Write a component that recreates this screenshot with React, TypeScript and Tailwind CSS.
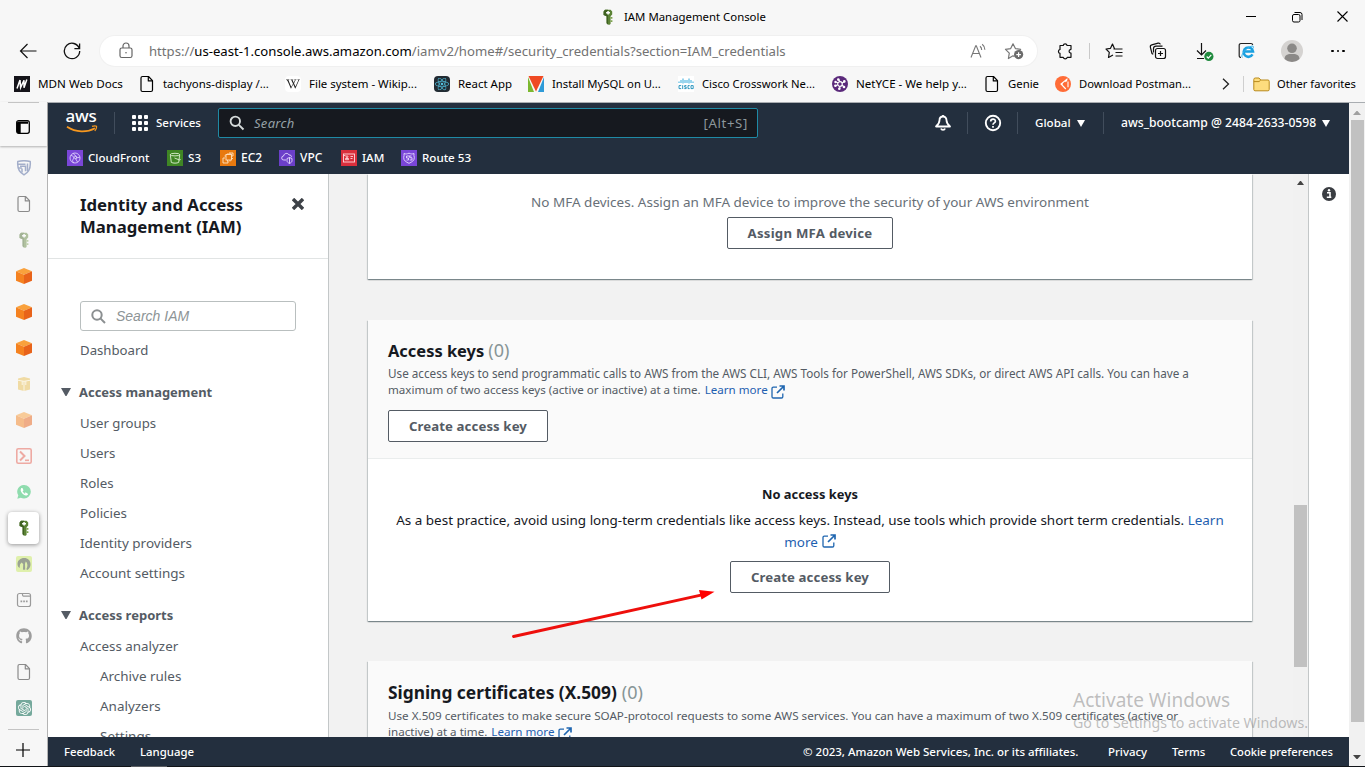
import React from "react";
import { FaGithub, FaReact, FaWikipediaW } from "react-icons/fa";
import { SiOpenai } from "react-icons/si";

type IconProps = { className?: string };

const KeyIcon = ({ className = "" }: IconProps) => (
  <svg viewBox="0 0 12 16" className={`h-4 w-3 ${className}`}>
    <path d="M3 .8h5.6l1.6 1.8v3L8.600 7.200V15L7 16 4.600 14.200V7.300L1.600 6V2.400z" fill="#5b8235" />
    <path d="M1.600 2.400 3 .8h3v15L4.600 14.200V7.300L1.600 6z" fill="#3f6121" />
    <path d="M8.600 8h1.800v1.800H8.600zM8.600 11.200h1.800V13H8.600z" fill="#7da34d" />
    <path d="M5.300 2h1.500v1.100h1.200v1.300H6.800v1.200H5.300V4.400H4.100V3.100h1.200z" fill="#fff" />
  </svg>
);

const PageIcon = ({ className = "" }: IconProps) => (
  <svg viewBox="0 0 16 18" className={className} fill="none" stroke="currentColor" strokeWidth="1.200" strokeLinejoin="round">
    <path d="M3.500 1.500h6l4 4.200V15a1.500 1.500 0 0 1-1.500 1.500H3.500A1.500 1.500 0 0 1 2 15V3a1.500 1.500 0 0 1 1.500-1.500z" />
    <path d="M9.300 1.700V5.900h4.100" />
  </svg>
);

const CubeIcon = ({ className = "" }: IconProps) => (
  <svg viewBox="0 0 16 16" className={`size-4 ${className}`}>
    <path d="M8 0l8 3.300L8 6.800 0 3.300z" fill="#f9a13c" />
    <path d="M0 3.300 8 6.800V16l-8-3.300z" fill="#f58220" />
    <path d="M16 3.300 8 6.800V16l8-3.300z" fill="#e8631a" />
  </svg>
);

const BoxIcon = () => (
  <svg viewBox="0 0 16 16" className="size-4">
    <path d="M2 2.600 8 1l6 1.600v10.800L8 15l-6-1.600z" fill="#f0dba4" />
    <path d="M1.500 4.200 8 5.300l6.500-1.100M8 5v10M6.200 5v4M9.800 5v4" stroke="#fbf6e6" strokeWidth="1" fill="none" />
  </svg>
);

const CrestIcon = () => (
  <svg viewBox="0 0 16 16" className="size-4" fill="none" stroke="#a3aeca" strokeWidth="1.500">
    <path d="M1.800 1.500c4-1 8.400-1 12.400 0 .6 6-.7 10.500-6.200 13.300C2.500 12 1.200 7.500 1.800 1.500z" />
    <path d="M2 4.200h7.500M4 6.300h5.500v5M6 8.400v4M11.500 3.500v7.500M2.500 8h3.300" />
  </svg>
);

const ShellIcon = () => (
  <svg viewBox="0 0 16 16" className="size-4" fill="none" stroke="#eeaaa3" strokeWidth="1.600">
    <rect x=".8" y=".8" width="14.400" height="14.400" rx="1.500" />
    <path d="M4 3.500 8.500 8 4 12.500" strokeWidth="2" />
    <path d="M9 12.300h4" />
  </svg>
);

const ChatIcon = () => (
  <svg viewBox="0 0 14 14" className="size-[14px]">
    <path d="M7.200 0A6.700 6.700 0 0 1 7 13.500c-1.200 0-2.300-.3-3.200-.8L.3 13.700l1-3.400A6.700 6.700 0 0 1 7.200 0z" fill="#8fdcae" />
    <path d="M4.800 4c-.7 1-.2 2.600 1.100 4s3 2.200 4 1.400" stroke="#fff" strokeWidth="1.500" fill="none" strokeLinecap="round" />
    <path d="M4.900 3.700 5.700 5.300M8.500 8.200l1.600.9" stroke="#fff" strokeWidth="1.500" strokeLinecap="round" />
  </svg>
);

const LeafIcon = () => (
  <svg viewBox="0 0 16 16" className="size-4">
    <rect width="16" height="16" rx="2" fill="#dff0ac" />
    <path d="M1.500 8C1.500 4.500 4.500 2 8.200 2c3.600 0 6.300 2.500 6.300 6.200 0 2.500-1 4.300-3 5.800l-1.200-.8c1.300-2 1.500-4.500.4-6.700L9.700 5.500 9 8l.2 5.500c-1 .5-1.800.3-2.200 0L7.200 8 5.500 6.500 4 8.500 3.600 12C2.300 11.200 1.500 10 1.500 8z" fill="#9aa193" />
  </svg>
);

const WindowIcon = () => (
  <svg viewBox="0 0 16 16" className="size-4" fill="none" stroke="#9b9b9b" strokeWidth="1.200">
    <rect x="1.500" y="1.500" width="13" height="13" rx="2" />
    <path d="M6.500 1.500v1.200a1.500 1.500 0 0 0 1.500 1.500h6.300" />
    <path d="M4.500 9.300h1.700M7.200 9.300h1.700M9.900 9.300h1.700" strokeWidth="1.700" />
  </svg>
);

const MdnIcon = () => (
  <svg viewBox="0 0 16 16" className="size-4">
    <rect width="16" height="16" fill="#15141a" />
    <path d="M3 12.500 6 4M6 4l.6 7.500L10 4.200v7.500L12.800 3.500" stroke="#fff" strokeWidth="1.500" fill="none" />
  </svg>
);

const VultureIcon = () => (
  <svg viewBox="0 0 16 16" className="size-4">
    <path d="M0 1l6 15H0z" fill="#7cb82f" />
    <path d="M16 1l-6 15h6z" fill="#2f9bd8" />
    <path d="M.5 0h15L8 15.500z" fill="#ef4a23" />
  </svg>
);

const CiscoIcon = () => (
  <svg viewBox="0 0 16 16" className="size-4">
    <rect width="16" height="16" fill="#fff" />
    <path d="M1 5.500v1.500M3 4v3M5 2.500v5M7 4v3M9 4v3M11 2.500v5M13 4v3M15 5.500v1.500" stroke="#1ba0d7" strokeWidth=".9" />
    <path d="M3.200 9.600H1v3h2.200M4.700 9.200v3.800M8.400 9.600H6.700v1.500h1.500v1.500H6.300M11.700 9.600H10v3h1.700M13 9.600h2.200v3H13z" stroke="#1b8cb8" strokeWidth=".9" fill="none" />
  </svg>
);

const NetyceIcon = () => (
  <svg viewBox="0 0 16 16" className="size-4">
    <circle cx="8" cy="8" r="8" fill="#5b2a7b" />
    <circle cx="8" cy="8" r="2.300" fill="none" stroke="#fff" strokeWidth="1.200" />
    <path d="M8 5.500 6.500 3.500M10 7l2.800-1.500M10 9.200l2.500 1.800M8 10.500l-.5 2.500M5.700 8.800 3.200 10M6 6.800 3.500 6" stroke="#fff" strokeWidth="1.200" />
    <g fill="#fff"><circle cx="6.300" cy="3.600" r="1.300" /><circle cx="12.300" cy="5.400" r="1.300" /><circle cx="12" cy="11" r="1.300" /><circle cx="7.300" cy="12.800" r="1.300" /><circle cx="3.400" cy="9.800" r="1.300" /><circle cx="3.500" cy="6" r="1.200" /></g>
  </svg>
);

const PostmanIcon = () => (
  <svg viewBox="0 0 16 16" className="size-4">
    <circle cx="8" cy="8" r="8" fill="#ff6c37" />
    <path d="M12.500 2.800 6 8l4.800 5M10.500 5.800 12 4M6 8h1.800M13 5.500v5.700" stroke="#fff" strokeWidth="1.100" fill="none" />
  </svg>
);

const Sep = ({ className = "" }: IconProps) => <div className={`w-px shrink-0 ${className}`} />;

const bookmarks = [
  { w: "w-[125px]", icon: <MdnIcon />, label: "MDN Web Docs", t: "text-[11.64px]" },
  { w: "w-[146px]", icon: <PageIcon className="h-[18px] w-4 text-black" />, label: "tachyons-display /...", t: "text-[11.41px]" },
  { w: "w-[149px]", icon: <span className="flex size-4 items-center justify-center rounded-sm bg-white"><FaWikipediaW className="size-[14px] text-[#222]" /></span>, label: "File system - Wikip...", t: "text-[11.46px]" },
  { w: "w-[94px]", icon: <span className="flex size-4 items-center justify-center rounded-sm bg-[#222b33]"><FaReact className="size-[14px] text-[#53c1de]" /></span>, label: "React App", t: "text-[11.45px]" },
  { w: "w-[150px]", icon: <VultureIcon />, label: "Install MySQL on U...", t: "text-[11.28px]" },
  { w: "w-[154px]", icon: <CiscoIcon />, label: "Cisco Crosswork Ne...", t: "text-[11.27px]" },
  { w: "w-[152px]", icon: <NetyceIcon />, label: "NetYCE - We help y...", t: "text-[11.58px]" },
  { w: "w-[71px]", icon: <PageIcon className="h-[18px] w-4 text-black" />, label: "Genie", t: "text-[11.35px]" },
  { w: "w-[158px]", icon: <PostmanIcon />, label: "Download Postman...", t: "text-[11.22px]" },
];

function BrowserChrome() {
  return (
    <header className="h-[102px] shrink-0 bg-[#f7f7f7] text-black">
      <div className="flex h-[33px] items-center">
        <div className="flex w-[1228px] items-center gap-[10px] pl-[602px]">
          <KeyIcon />
          <span className="text-[11.39px] leading-4">IAM Management Console</span>
        </div>
        <div className="flex w-[46px] justify-center"><div className="h-px w-[10px] bg-black" /></div>
        <div className="flex w-[46px] justify-center">
          <svg viewBox="0 0 12 12" className="size-3" fill="none" stroke="#000" strokeWidth="1">
            <rect x="1.500" y="3.500" width="7.500" height="7.500" rx="1.500" />
            <path d="M3.500 1.500H9a2 2 0 0 1 2 2V9" />
          </svg>
        </div>
        <div className="flex w-[45px] justify-center">
          <svg viewBox="0 0 11 11" className="size-[11px]" stroke="#000" strokeWidth="1.100"><path d="M.5.5l10 10M10.500.5l-10 10" /></svg>
        </div>
      </div>
      <div className="flex h-9 items-center pl-[10px]">
        <div className="flex w-9 justify-center">
          <svg viewBox="0 0 18 16" className="h-4 w-[18px]" fill="none" stroke="#111" strokeWidth="1.200"><path d="M1.500 8h16M8.500 1 1.500 8l7 7" /></svg>
        </div>
        <div className="ml-2 flex w-9 justify-center">
          <svg viewBox="0 0 18 18" className="size-[18px]" fill="none" stroke="#111" strokeWidth="1.300"><path d="M16.300 6.500A7.700 7.700 0 1 0 16.700 9M16.600 1.500v5.200h-5.200" /></svg>
        </div>
        <div className="ml-[10px] flex h-[30px] w-[937px] items-center rounded-full bg-white pr-1 pl-[18px] shadow-[0_0_1px_1px_rgba(0,0,0,0.03)]">
          <svg viewBox="0 0 16 18" className="h-[18px] w-4" fill="none" stroke="#666" strokeWidth="1.200">
            <rect x="2" y="6" width="12" height="9.500" rx="1.800" />
            <path d="M5 6V4a3 3 0 0 1 6 0v2" />
            <circle cx="8" cy="10.700" r=".8" fill="#666" stroke="none" />
          </svg>
          <span className="ml-[15px] w-[811px] text-[13.15px] leading-5 whitespace-nowrap text-[#727272]">
            https://<span className="text-black">us-east-1.console.aws.amazon.com</span>/iamv2/home#/security_credentials?section=IAM_credentials
          </span>
          <div className="flex w-9 justify-center">
            <svg viewBox="0 0 18 16" className="h-4 w-[18px]" fill="none" stroke="#777" strokeWidth="1.100">
              <path d="M2 14.500 6.700 2.800h.6l4.700 11.700M3.700 10.500h6.600M11 3.300a4.500 4.500 0 0 1 1.700 3.600M13.200 1.300a7 7 0 0 1 2.700 5.400" />
            </svg>
          </div>
          <div className="flex w-9 justify-center">
            <svg viewBox="0 0 20 18" className="h-[18px] w-5" fill="none" stroke="#777" strokeWidth="1.200" strokeLinejoin="round">
              <path d="M10.500 14.600 9 13.800l-4.600 2.700.9-5.300L1.500 7.300l5.200-.7L9 1.800l2.400 4.800 5.200.7-1.600 1.700" />
              <circle cx="14.600" cy="12.600" r="4.600" fill="#6b6b6b" stroke="none" />
              <path d="M14.600 10.300v4.600M12.300 12.600h4.600" stroke="#fff" />
            </svg>
          </div>
        </div>
        <div className="ml-[10px] flex w-9 justify-center">
          <svg viewBox="0 0 18 18" className="size-[18px]" fill="none" stroke="#111" strokeWidth="1.200" strokeLinejoin="round">
            <path d="M4 3.500h3.200a2 2 0 0 1 3.900 0H15V7a.7.700 0 0 1-.7.700 1.600 1.600 0 0 0 0 3.100.7.700 0 0 1 .7.700v3.800h-3.800a2 2 0 0 1-3.900 0H4v-3.900a2 2 0 0 1 0-3.900z" />
          </svg>
        </div>
        <Sep className="ml-[6px] h-4 bg-[#c9c9c9]" />
        <div className="ml-[6px] flex w-9 justify-center">
          <svg viewBox="0 0 18 18" className="size-[18px]" fill="none" stroke="#111" strokeWidth="1.200" strokeLinejoin="round">
            <path d="M9.500 6.800 7.500 2 5.500 6.300 1 7l3.300 3.400L3.500 15.500 8 13M8.500 7h9M10.500 10.500h7M10.500 14h7" />
          </svg>
        </div>
        <div className="ml-2 flex w-9 justify-center">
          <svg viewBox="0 0 18 18" className="size-[18px]" fill="none" stroke="#111" strokeWidth="1.200">
            <rect x="6.500" y="6.500" width="10" height="10" rx="2" />
            <path d="M11.500 9v5M9 11.500h5M4.300 12.300 3 11.500 1.400 5.300a2 2 0 0 1 1.400-2.400l6.300-1.700a2 2 0 0 1 2.300 1.200M4.500 10.500v-4a2.500 2.500 0 0 1 2.500-2.400h6.500" />
          </svg>
        </div>
        <div className="ml-[11px] flex w-9 justify-center">
          <svg viewBox="0 0 18 20" className="h-5 w-[18px]" fill="none" stroke="#111" strokeWidth="1.200">
            <path d="M5.500 2v12M1 9.500l4.500 4.500L10 9.500M1 17.500h7" />
            <circle cx="12.900" cy="15.400" r="4.600" fill="#1f8a3d" stroke="none" />
            <path d="m10.700 15.500 1.600 1.600 3-3.200" stroke="#fff" />
          </svg>
        </div>
        <div className="ml-[5px] flex w-9 justify-center">
          <svg viewBox="0 0 18 18" className="size-[18px]" fill="none">
            <path d="M4 15.500A1.800 1.800 0 0 1 2.200 13.700V3.200A1.700 1.700 0 0 1 4 1.500h10A1.700 1.700 0 0 1 15.700 3" stroke="#222" strokeWidth="1.200" />
            <path d="M15.500 12.400a4.700 4.700 0 1 1 .5-3H7.500" stroke="#1aa0e0" strokeWidth="2.500" />
            <path d="M5.500 15.500C3 14 8 6 15 4c2-.2 1.500 1.500 1 2.500" stroke="#35b4ee" strokeWidth="1" />
          </svg>
        </div>
        <div className="ml-[10px] flex w-9 justify-center">
          <svg viewBox="0 0 22 22" className="size-[22px]">
            <circle cx="11" cy="11" r="11" fill="#d5d3d1" />
            <circle cx="11" cy="8.300" r="4.800" fill="#8b8987" />
            <path d="M3.500 19c.5-5 4-5 7.500-5s7 0 7.500 5a11 11 0 0 1-15 0z" fill="#8b8987" />
          </svg>
        </div>
        <div className="ml-[10px] flex w-9 justify-center gap-[3px]">
          <i className="size-[2.500px] rounded-full bg-black" /><i className="size-[2.500px] rounded-full bg-black" /><i className="size-[2.500px] rounded-full bg-black" />
        </div>
      </div>
      <div className="flex h-[30px] items-center pl-[14px] whitespace-nowrap">
        {bookmarks.map((b) => (
          <div key={b.label} className={`flex shrink-0 items-center gap-2 ${b.w}`}>
            {b.icon}
            <span className={`leading-4 ${b.t}`}>{b.label}</span>
          </div>
        ))}
        <div className="flex w-[30px] justify-center pr-1">
          <svg viewBox="0 0 8 12" className="h-3 w-2" fill="none" stroke="#222" strokeWidth="1.300"><path d="M1 .8 6.500 6 1 11.200" /></svg>
        </div>
        <Sep className="h-4 bg-[#cfcfcf]" />
        <svg viewBox="0 0 17 16" className="ml-[9px] h-4 w-[17px]" stroke="#b98a1c" strokeWidth="1">
          <path d="M.8 3.500A1.500 1.500 0 0 1 2.300 2H6l1.800 2H15a1.300 1.300 0 0 1 1.200 1.300v8.200a1.300 1.300 0 0 1-1.300 1.300H2a1.300 1.300 0 0 1-1.200-1.300z" fill="#fddc7d" />
          <path d="M.8 5.600H6L7.800 4" fill="none" />
        </svg>
        <span className="ml-[7px] text-[11.14px] leading-4">Other favorites</span>
      </div>
    </header>
  );
}

const tabs: { key: string; icon: React.ReactNode; active?: boolean }[] = [
  { key: "crest", icon: <CrestIcon /> },
  { key: "page1", icon: <PageIcon className="h-[18px] w-4 text-[#8b8b8b]" /> },
  { key: "key1", icon: <KeyIcon className="opacity-45" /> },
  { key: "cube1", icon: <CubeIcon /> },
  { key: "cube2", icon: <CubeIcon /> },
  { key: "cube3", icon: <CubeIcon /> },
  { key: "box", icon: <BoxIcon /> },
  { key: "cube4", icon: <CubeIcon className="opacity-50" /> },
  { key: "shell", icon: <ShellIcon /> },
  { key: "chat", icon: <ChatIcon /> },
  { key: "iam", icon: <KeyIcon />, active: true },
  { key: "leaf", icon: <LeafIcon /> },
  { key: "window", icon: <WindowIcon /> },
  { key: "github", icon: <FaGithub className="size-4 text-[#9d9d9d]" /> },
  { key: "page2", icon: <PageIcon className="h-[18px] w-4 text-[#8b8b8b]" /> },
  { key: "ai", icon: <span className="flex size-4 items-center justify-center rounded-[2px] bg-[#75a99c]"><SiOpenai className="size-[13px] text-white" /></span> },
];

function TabRail() {
  return (
    <aside className="flex w-12 shrink-0 flex-col border-r border-[#b4b4b4] bg-[#f7f7f7]">
      <div className="flex h-[44px] flex-col shadow-[0_1px_2px_rgba(0,0,0,0.28)]">
        <div className="mx-2 h-px bg-[#c4c4c4]" />
        <div className="flex flex-1 items-center justify-center pt-1 pr-px">
          <svg viewBox="0 0 14 14" className="size-[14px]">
            <rect x=".7" y=".7" width="12.600" height="12.600" rx="2" fill="none" stroke="#000" strokeWidth="1.300" />
            <path d="M2 1.500h10v2.200H4.700V13H2a1 1 0 0 1-1-1V2.500z" fill="#000" />
          </svg>
        </div>
      </div>
      <div className="mt-1 flex flex-col">
        {tabs.map((t) => (
          <div key={t.key} className="flex h-9 items-center justify-center pl-px">
            {t.active ? (
              <div className="mr-px flex h-8 w-[31px] items-center justify-center rounded bg-white pl-px shadow-[0_1px_4px_rgba(0,0,0,0.4)]">{t.icon}</div>
            ) : (
              t.icon
            )}
          </div>
        ))}
      </div>
      <div className="mx-2 mt-[3px] h-px bg-[#c4c4c4]" />
      <div className="flex flex-1 items-center justify-center pt-1 pr-px">
        <svg viewBox="0 0 14 14" className="size-[14px]" stroke="#000" strokeWidth="1.200"><path d="M7 0v14M0 7h14" /></svg>
      </div>
    </aside>
  );
}

const tile = "size-4 shrink-0";
const shortcuts = [
  { label: "CloudFront", w: "w-[100px]", t: "text-[11.55px]", icon: (
    <svg viewBox="0 0 16 16" className={tile}><rect width="16" height="16" fill="#7a46d8" /><g fill="none" stroke="#e6dcff" strokeWidth=".8"><circle cx="8" cy="8" r="5" /><path d="M4 5.500c3 0 3 3 2 4s0 3 1 3.500M6.500 3.300c0 2 3 2 3 4M9 8l3.800-.8M8.500 8.500 10.500 12" /><circle cx="8.500" cy="7.500" r="1.200" /></g></svg>
  ) },
  { label: "S3", w: "w-[53px]", t: "text-[11.6px]", icon: (
    <svg viewBox="0 0 16 16" className={tile}><rect width="16" height="16" fill="#3f8624" /><g fill="none" stroke="#dcefd2" strokeWidth=".9"><ellipse cx="8" cy="4.600" rx="4.700" ry="1.300" /><path d="m3.300 4.600 1 7.800c1.800 1 5.600 1 7.400 0l1-7.800M7.500 8l5 2c1 .2 1-.6.300-1" /></g></svg>
  ) },
  { label: "EC2", w: "w-[59px]", t: "text-[12px]", icon: (
    <svg viewBox="0 0 16 16" className={tile}><rect width="16" height="16" fill="#e8790f" /><g fill="none" stroke="#ffe3c2" strokeWidth=".9"><rect x="6" y="4.500" width="5.500" height="5.500" /><path d="M5 8H3v5h5v-2M8 4.500V3M10 4.500V3M11.500 6H13M11.500 8.500H13M7.500 10v1.500M10 10v1.500M6 6H4.500M9 3h4v3" /></g></svg>
  ) },
  { label: "VPC", w: "w-[62px]", t: "text-[12px]", icon: (
    <svg viewBox="0 0 16 16" className={tile}><rect width="16" height="16" fill="#6b3fc9" /><g fill="none" stroke="#e6dcff" strokeWidth=".9"><path d="M7 10H4.800a2 2 0 0 1-.2-4C5 3 9 2.500 10 5c1.500-.2 2.500.6 2.500 1.800" /><path d="M8 8.500 10.500 7.500 13 8.500v2c0 1.500-1 2.300-2.500 3-1.500-.7-2.500-1.500-2.500-3zM10.500 7.500v6" /></g></svg>
  ) },
  { label: "IAM", w: "w-[60px]", t: "text-[11.6px]", icon: (
    <svg viewBox="0 0 16 16" className={tile}><rect width="16" height="16" fill="#d92f3c" /><g fill="none" stroke="#ffd9dc" strokeWidth=".9"><rect x="2.500" y="4" width="11" height="8" /><path d="M4.500 9.700h3V8.500h-3zM9.500 6.500h2.500M9.500 8.500h2M2.500 5.500h2" /><circle cx="6" cy="6.700" r=".9" /></g></svg>
  ) },
  { label: "Route 53", w: "w-[80px]", t: "text-[11.6px]", icon: (
    <svg viewBox="0 0 16 16" className={tile}><rect width="16" height="16" fill="#7a46d8" /><g fill="none" stroke="#e6dcff" strokeWidth=".9"><path d="M3 3.500c1.500.8 3 .5 5-.3 2 .8 3.500 1.100 5 .3-.3 1.500 0 2.500.3 4 .2 3-2.300 4.500-5.300 5.800C5 12 2.500 10.500 2.700 7.500 3 6 3.300 5 3 3.500z" /><path d="M5.500 6h5M5.500 6v2h2v2h-2M8.700 6v1.700H11V10H8.700" /></g></svg>
  ) },
];

const Caret = ({ className = "" }: IconProps) => (
  <svg viewBox="0 0 8 7" className={`h-[7px] w-2 ${className}`} fill="currentColor"><path d="M0 0h8L4 7z" /></svg>
);

function ConsoleNav() {
  return (
    <nav className="h-[71px] shrink-0 bg-[#232f3e] font-medium text-white">
      <div className="flex h-10 items-center pl-[18px]">
        <div className="flex w-8 flex-col items-center">
          <span className="-mt-[3px] mr-[2px] text-[17px] leading-[14px] font-medium tracking-[-0.2px]">aws</span>
          <svg viewBox="0 0 32 9" className="mt-[2px] h-[9px] w-8" fill="none" stroke="#f7981f">
            <path d="M1 1.800c9 5.900 20 5.900 28 1.500" strokeWidth="1.700" />
            <path d="M26 1.400c2-.7 3.700-.7 4.500-.2.300 1-.4 3-1.700 4.800" strokeWidth="1.200" />
          </svg>
        </div>
        <Sep className="ml-4 h-[22px] bg-[#414d5c]" />
        <div className="ml-[17px] grid size-4 grid-cols-3 gap-[2px]">
          {Array.from({ length: 9 }, (_, i) => <i key={i} className="rounded-[1px] bg-white" />)}
        </div>
        <span className="ml-2 w-[62px] text-[11.55px] leading-4">Services</span>
        <div className="flex h-[30px] w-[540px] items-center rounded-[2px] border border-[#1f8aa5] bg-[#16191f] pr-[9px] pl-[10px] font-normal">
          <svg viewBox="0 0 16 16" className="size-4" fill="none" stroke="#d5dbdb" strokeWidth="1.900"><circle cx="6.300" cy="6.300" r="4.700" /><path d="m9.800 9.800 4.700 4.700" /></svg>
          <span className="ml-[9px] flex-1 text-[13px] leading-5 tracking-[0.3px] text-[#95a0a6] italic">Search</span>
          <span className="text-[13.2px] leading-5 tracking-[0.65px] text-[#8d979c]">[Alt+S]</span>
        </div>
        <div className="ml-[176px] flex w-[18px] justify-center">
          <svg viewBox="0 0 18 18" className="size-[18px]" fill="none" stroke="#fff" strokeWidth="1.800" strokeLinejoin="round"><path d="M9 2.500c-2.300 0-3.500 1.700-3.500 3.700 0 2.500-1 4-3.500 6.300h14c-2.500-2.300-3.500-3.800-3.500-6.300 0-2-1.200-3.700-3.500-3.700zM9 2.500V1M7 14.500c.5 1.700 3.500 1.700 4 0" /></svg>
        </div>
        <Sep className="ml-[15px] h-[22px] bg-[#414d5c]" />
        <svg viewBox="0 0 18 18" className="ml-4 size-[18px]" fill="none" stroke="#fff" strokeWidth="1.900"><circle cx="9" cy="9" r="7.200" /><path d="M6.700 7.500c0-3 4.700-3 4.700-.3 0 1.700-2.400 1.700-2.400 3.500M9 12v1.700" strokeWidth="1.700" /></svg>
        <Sep className="ml-[15px] h-[22px] bg-[#414d5c]" />
        <span className="ml-[17px] w-[36px] text-[11.6px] leading-4">Global</span>
        <Caret className="ml-[6px]" />
        <Sep className="ml-[18px] h-[22px] bg-[#414d5c]" />
        <span className="ml-[17px] w-[195px] text-[12.15px] leading-4 whitespace-nowrap">aws_bootcamp @ 2484-2633-0598</span>
        <Caret className="ml-[6px]" />
      </div>
      <div className="flex h-[30px] items-center pl-[19px]">
        {shortcuts.map((s) => (
          <div key={s.label} className={`flex items-center gap-[5px] ${s.w}`}>
            {s.icon}
            <span className={`leading-4 whitespace-nowrap ${s.t}`}>{s.label}</span>
          </div>
        ))}
      </div>
    </nav>
  );
}

const NavLink = ({ children, className = "text-[13.3px]" }: { children: React.ReactNode; className?: string }) => (
  <a className={`block h-[30px] pl-8 leading-[30px] whitespace-nowrap ${className}`}>{children}</a>
);

const NavGroup = ({ title, className }: { title: string; className: string }) => (
  <div className={`mt-3 mb-px flex h-[30px] items-center pl-[13px] font-bold ${className}`}>
    <svg viewBox="0 0 10 8" className="h-2 w-[10px]" fill="#545b64"><path d="M0 0h10L5.500 8h-1z" /></svg>
    <span className="ml-2 leading-[30px]">{title}</span>
  </div>
);

function SideNav() {
  return (
    <aside className="flex w-[281px] shrink-0 flex-col overflow-hidden border-r border-[#c3c7c8] bg-white text-[#545b64]">
      <div className="flex h-[85px] shrink-0 border-b border-[#e1e4e4] pt-5 pl-8 text-[16.75px] leading-[22px] font-bold text-[#16191f]">
        <h2 className="w-[212px]">Identity and Access<br />Management (IAM)</h2>
        <svg viewBox="0 0 12 12" className="mt-1 size-3" stroke="#3d4147" strokeWidth="3.400"><path d="m1 1 10 10M11 1 1 11" /></svg>
      </div>
      <div className="mt-[42px] mb-1 ml-8 flex h-[30px] w-[216px] shrink-0 items-center rounded-[3px] border border-[#b9bfbf] pl-[10px]">
        <svg viewBox="0 0 15 15" className="size-[15px]" fill="none" stroke="#8b8f91" strokeWidth="2"><circle cx="6" cy="6" r="4.700" /><path d="m9.400 9.400 4.600 4.600" /></svg>
        <span className="ml-[10px] font-['Liberation_Sans'] text-[14px] leading-5 text-[#8d9496] italic">Search IAM</span>
      </div>
      <NavLink className="text-[13.2px]">Dashboard</NavLink>
      <NavGroup title="Access management" className="text-[12.95px]" />
      <NavLink className="text-[13.2px]">User groups</NavLink>
      <NavLink>Users</NavLink>
      <NavLink>Roles</NavLink>
      <NavLink className="text-[13.4px]">Policies</NavLink>
      <NavLink className="text-[13.47px]">Identity providers</NavLink>
      <NavLink className="text-[13.47px]">Account settings</NavLink>
      <NavGroup title="Access reports" className="text-[13px]" />
      <NavLink className="text-[13.4px]">Access analyzer</NavLink>
      <div className="pl-5">
        <NavLink className="text-[13.45px]">Archive rules</NavLink>
        <NavLink className="text-[13.45px]">Analyzers</NavLink>
        <NavLink className="text-[13.45px]">Settings</NavLink>
      </div>
    </aside>
  );
}

const ExternalIcon = ({ className = "" }: IconProps) => (
  <svg viewBox="0 0 14 14" className={`inline-block size-[14px] ${className}`} fill="none" stroke="#1f66b0" strokeWidth="1.700">
    <path d="M6 2.200H2.300a1.300 1.300 0 0 0-1.300 1.300v8.200A1.300 1.300 0 0 0 2.300 13h8.200a1.300 1.300 0 0 0 1.300-1.300V8.500" strokeWidth="1.300" />
    <path d="M8.500 1H13v4.500M13 1 6 8" />
  </svg>
);

const OutlineButton = ({ children, className }: { children: React.ReactNode; className: string }) => (
  <button className={`flex h-8 items-center justify-center rounded-[2px] border border-[#545b64] bg-white font-bold whitespace-nowrap text-[#545b64] ${className}`}>{children}</button>
);

const card = "w-[884px] shrink-0 bg-white shadow-[0_1px_1px_0_rgba(0,28,36,0.3),1px_1px_1px_0_rgba(0,28,36,0.15),-1px_1px_1px_0_rgba(0,28,36,0.15)]";

function Main() {
  return (
    <main className="flex flex-1 flex-col items-start overflow-hidden bg-[#f2f2f2] pl-[39px] whitespace-nowrap">
      <section className={`${card} flex h-[105px] flex-col items-center pt-[17px]`}>
        <p className="text-[13.49px] leading-[22px] tracking-[0.01px] text-[#687078]">No MFA devices. Assign an MFA device to improve the security of your AWS environment</p>
        <OutlineButton className="mt-1 w-[166px] pt-px text-[13.2px] tracking-[0.25px]">Assign MFA device</OutlineButton>
      </section>
      <section className={`${card} mt-[41px] flex h-[301px] flex-col`}>
        <div className="h-[139px] shrink-0 border-b border-[#eaeded] bg-[#fafafa] px-5 pt-5">
          <h2 className="flex h-[22px] items-baseline gap-1 text-[16.45px] leading-[22px] font-bold text-[#16191f]">Access keys<span className="text-[18px] leading-5 font-normal text-[#879596]">(0)</span></h2>
          <p className="mt-1 text-[11.69px] leading-4 text-[#545b64]">Use access keys to send programmatic calls to AWS from the AWS CLI, AWS Tools for PowerShell, AWS SDKs, or direct AWS API calls. You can have a</p>
          <p className="flex h-4 text-[11.59px] leading-4 text-[#545b64]">maximum of two access keys (active or inactive) at a time.<a className="ml-1 text-[#1f5fb0]">Learn more</a><ExternalIcon className="mt-[3px] ml-[3px]" /></p>
          <OutlineButton className="mt-3 w-[160px] pt-px text-[13.2px] tracking-[0.1px]">Create access key</OutlineButton>
        </div>
        <div className="flex flex-col items-center pt-6 text-[13.46px] leading-[22px] text-[#16191f]">
          <h3 className="text-[12.87px] font-bold">No access keys</h3>
          <p className="mt-1">As a best practice, avoid using long-term credentials like access keys. Instead, use tools which provide short term credentials. <a className="text-[#1f5fb0]">Learn</a></p>
          <p className="flex items-center text-[#1f5fb0]">more<ExternalIcon className="-mt-[2px] ml-1" /></p>
          <OutlineButton className="mt-2 w-[160px] text-[13.2px] leading-5 tracking-[0.1px]">Create access key</OutlineButton>
        </div>
      </section>
      <section className={`${card} mt-10 h-[160px]`}>
        <div className="h-full bg-[#fafafa] px-5 pt-5">
          <h2 className="flex h-[22px] items-baseline gap-[5px] text-[17.34px] leading-[22px] font-bold text-[#16191f]">Signing certificates (X.509)<span className="text-[18px] leading-5 font-normal text-[#879596]">(0)</span></h2>
          <p className="mt-[5px] text-[11.67px] leading-4 text-[#545b64]">Use X.509 certificates to make secure SOAP-protocol requests to some AWS services. You can have a maximum of two X.509 certificates (active or</p>
          <p className="flex h-4 text-[11.62px] leading-4 text-[#545b64]">inactive) at a time.<a className="ml-1 text-[#1f5fb0]">Learn more</a><ExternalIcon className="mt-[3px] ml-1" /></p>
        </div>
      </section>
    </main>
  );
}

function ConsoleFooter() {
  return (
    <footer className="flex h-[29px] shrink-0 items-center bg-[#232f3e] px-4 leading-4 font-medium whitespace-nowrap text-white">
      <span className="w-[76px] text-[11.25px]">Feedback</span>
      <span className="text-[11.4px]">Language</span>
      <span className="ml-auto w-[305px] text-[11.5px]">© 2023, Amazon Web Services, Inc. or its affiliates.</span>
      <span className="w-[64px] text-[11.45px]">Privacy</span>
      <span className="w-[58px] text-[11.4px]">Terms</span>
      <span className="w-[103px] text-[11.2px]">Cookie preferences</span>
    </footer>
  );
}

export default function App() {
  return (
    <div className="relative flex h-[767px] w-[1365px] flex-col overflow-hidden bg-[#f7f7f7] font-['Noto_Sans','Open_Sans',sans-serif]">
      <BrowserChrome />
      <div className="flex h-[664px] shrink-0">
        <TabRail />
        <div className="flex w-[1301px] flex-col border-t border-[#a9adb1]">
          <ConsoleNav />
          <div className="flex h-[563px] shrink-0">
            <SideNav />
            <Main />
            <div className="flex w-4 flex-col items-center border-r border-[#c3c7c8] bg-[#f1f1f1] pt-[7px]">
              <svg viewBox="0 0 7 4" className="h-1 w-[7px]" fill="#444"><path d="M0 4h7L4 0H3z" /></svg>
              <div className="mt-[320px] h-[162px] w-[13px] bg-[#c1c1c1]" />
            </div>
            <div className="flex w-10 justify-center bg-white pt-[13px]">
              <svg viewBox="0 0 14 14" className="size-[14px]"><circle cx="7" cy="7" r="7" fill="#3a3d42" /><path d="M5 5.700h3V10M4.800 10.300h4.500" stroke="#fff" strokeWidth="1.600" fill="none" /><circle cx="7" cy="3.300" r="1.200" fill="#fff" /></svg>
            </div>
          </div>
          <ConsoleFooter />
        </div>
        <div className="flex w-4 flex-col items-center border-t border-[#a9adb1] bg-[#f1f1f1] pt-2">
          <svg viewBox="0 0 8 4" className="h-1 w-2" fill="#a0a0a0"><path d="M0 4h8L4.500 0h-1z" /></svg>
          <div className="mt-[5px] h-[602px] w-[13px] bg-[#c1c1c1]" />
          <svg viewBox="0 0 8 4" className="mt-[33px] h-1 w-2" fill="#444"><path d="M0 0h8L4.500 4h-1z" /></svg>
        </div>
      </div>
      <div className="flex h-px shrink-0 bg-[#111418] pl-[131px]"><div className="w-9 bg-[#5c5f63]" /></div>

      <svg viewBox="0 0 210 54" className="pointer-events-none absolute top-[586px] left-[508px] h-[54px] w-[210px]">
        <path d="M5.500 50.500 194 8.800" stroke="#ee0f0c" strokeWidth="2.900" strokeLinecap="round" />
        <path d="M191 4 206.500 5.700 193.500 13.500z" fill="#f00" />
      </svg>
      <div className="pointer-events-none absolute top-[688px] left-[1073px] whitespace-nowrap text-[#8a8a8a]/55">
        <div className="text-[19px] leading-6">Activate Windows</div>
        <div className="text-[14.19px] leading-[22px]">Go to Settings to activate Windows.</div>
      </div>
    </div>
  );
}
